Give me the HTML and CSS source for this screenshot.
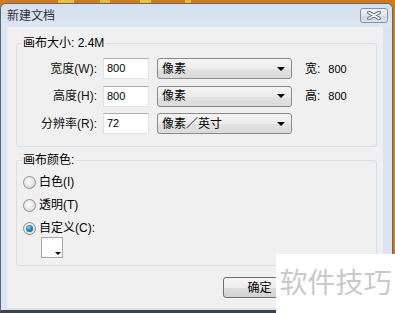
FILE: index.html
```html
<!DOCTYPE html>
<html lang="zh-CN">
<head>
<meta charset="utf-8">
<title>新建文档</title>
<link rel="stylesheet" href="styles.css">
</head>
<body>
<div class="desktop">
  <div class="window">
    <div class="titlebar">
      <span class="title">新建文档</span>
      <button class="close" type="button" aria-label="关闭">
        <svg width="14" height="9" viewBox="0 0 14 9">
          <path d="M2 1.5 L12 7.5 M12 1.5 L2 7.5" stroke="#55606e" stroke-width="3.6" stroke-linecap="round"/>
          <path d="M2 1.5 L12 7.5 M12 1.5 L2 7.5" stroke="#ffffff" stroke-width="1.8" stroke-linecap="round"/>
        </svg>
      </button>
    </div>
    <div class="client">
      <fieldset class="group group-size">
        <legend>画布大小: 2.4M</legend>
        <div class="rows">
          <div class="row">
            <label class="lbl">宽度(W):</label>
            <div class="input">800</div>
            <div class="combo"><span>像素</span><i class="arrow"></i></div>
            <span class="info">宽:<span class="num">800</span></span>
          </div>
          <div class="row">
            <label class="lbl">高度(H):</label>
            <div class="input">800</div>
            <div class="combo"><span>像素</span><i class="arrow"></i></div>
            <span class="info">高:<span class="num">800</span></span>
          </div>
          <div class="row">
            <label class="lbl">分辨率(R):</label>
            <div class="input">72</div>
            <div class="combo"><span>像素／英寸</span><i class="arrow"></i></div>
          </div>
        </div>
      </fieldset>
      <fieldset class="group group-color">
        <legend>画布颜色:</legend>
        <div class="radios">
          <div class="radio"><span class="dot"></span>白色(I)</div>
          <div class="radio"><span class="dot"></span>透明(T)</div>
          <div class="radio"><span class="dot on"></span>自定义(C):</div>
        </div>
        <div class="swatch"><i class="mini-arrow"></i></div>
      </fieldset>
      <div class="buttons">
        <button class="btn" type="button">确定</button>
        <button class="btn" type="button" aria-label="取消"></button>
      </div>
    </div>
  </div>
</div>
<div class="watermark">软件技巧</div>
</body>
</html>
```
FILE: styles.css
```css
* { box-sizing: border-box; }
html, body { margin: 0; padding: 0; }
body {
  width: 395px;
  height: 313px;
  overflow: hidden;
  position: relative;
  background:
    linear-gradient(90deg, transparent 58px, #e8c03c 58px, #e8c03c 74px, transparent 74px,
      transparent 100px, #e6bd3a 100px, #e6bd3a 110px, transparent 110px,
      transparent 140px, #e9c43e 140px, #e9c43e 151px, transparent 151px,
      transparent 185px, #e6bd3a 185px, #e6bd3a 191px, transparent 191px) top left / 395px 3px no-repeat,
    #cf7a1f;
  font-family: "Liberation Sans", "Noto Sans CJK SC", sans-serif;
  font-size: 12px;
  color: #000;
}
.desktop { padding-top: 3px; }
.window {
  width: 393px;
  height: 310px;
  border: 1px solid #5d6773;
  border-bottom: 3px solid #3d434a;
  border-radius: 6px 6px 0 0;
  background: #dbe5f1;
  display: flex;
  flex-direction: column;
  padding-bottom: 2px;
}
.titlebar {
  height: 23px;
  flex: none;
  display: flex;
  align-items: center;
  padding-left: 6px;
  border-radius: 5px 5px 0 0;
  background: linear-gradient(#d4e0ee, #dde7f3);
}
.title {
  color: #2b2f35;
  line-height: 14px;
  margin-top: 1px;
}
.close {
  margin-left: auto;
  margin-right: 4px;
  align-self: flex-start;
  margin-top: 4px;
  width: 28px;
  height: 15px;
  padding: 0;
  border: 1px solid #8393a7;
  border-radius: 3px;
  background: linear-gradient(#eef2f7, #dbe3ee 50%, #cfd9e6 51%, #d9e2ec);
  display: flex;
  align-items: center;
  justify-content: center;
}
.close svg { display: block; }
.client {
  margin: 0 9px 0 6px;
  height: 281px;
  background: #f0f0f0;
  padding: 9px 6px 0 9px;
  display: flex;
  flex-direction: column;
}
.group {
  margin: 0;
  border: 1px solid #d5dfe5;
  border-radius: 3px;
  padding: 0;
  min-width: 0;
}
.group legend {
  margin-left: 5px;
  padding: 0 1px;
  line-height: 14px;
  color: #000;
}
.group-size { padding: 8px 0 12px; }
.rows {
  display: flex;
  flex-direction: column;
  gap: 6.5px;
}
.row {
  display: flex;
  align-items: center;
  height: 21px;
}
.lbl {
  width: 80px;
  text-align: right;
  line-height: 14px;
  color: #111;
}
.input {
  margin-left: 6px;
  width: 46px;
  height: 21px;
  border: 1px solid #dfe3e9;
  border-top-color: #abadb3;
  background: #fff;
  padding: 0 3px;
  line-height: 19px;
  font-size: 11px;
}
.combo {
  margin-left: 8px;
  width: 135px;
  height: 21px;
  border: 1px solid #8a8a8a;
  border-radius: 3px;
  background: linear-gradient(#f6f6f6, #ececec 50%, #e2e2e2 51%, #dadada);
  display: flex;
  align-items: center;
  padding: 0 6px 0 4px;
  line-height: 14px;
}
.combo span { flex: 1; }
.arrow {
  width: 0;
  height: 0;
  border-left: 4px solid transparent;
  border-right: 4px solid transparent;
  border-top: 4px solid #000;
}
.info {
  margin-left: 13px;
  line-height: 14px;
}
.info .num {
  margin-left: 8px;
  font-size: 11px;
}
.group-color { margin-top: 6px; padding: 7px 0 7px; }
.radios {
  display: flex;
  flex-direction: column;
  gap: 7px;
}
.radio {
  display: flex;
  align-items: center;
  height: 16px;
  line-height: 14px;
}
.dot {
  width: 13px;
  height: 13px;
  margin-left: 6px;
  margin-right: 3px;
  border-radius: 50%;
  border: 1px solid #8e8f8f;
  background: radial-gradient(circle at 45% 40%, #ffffff 0, #e9e9e9 45%, #cfcfcf 90%);
  position: relative;
}
.dot.on::after {
  content: "";
  position: absolute;
  left: 2px;
  top: 2px;
  width: 7px;
  height: 7px;
  border-radius: 50%;
  background: radial-gradient(circle at 40% 35%, #8ed0f0 0, #2a86b8 45%, #0c4a6f 100%);
}
.swatch {
  margin: 1px 0 0 24px;
  width: 22px;
  height: 21px;
  border: 1px solid #a6a6a6;
  background: #fff;
  position: relative;
}
.mini-arrow {
  position: absolute;
  right: 1px;
  bottom: 2px;
  width: 0;
  height: 0;
  border-left: 3px solid transparent;
  border-right: 3px solid transparent;
  border-top: 3px solid #000;
}
.buttons {
  margin-top: 11px;
  display: flex;
  justify-content: flex-end;
  gap: 8px;
}
.btn {
  width: 73px;
  height: 21px;
  border: 1px solid #707070;
  border-radius: 3px;
  background: linear-gradient(#f4f4f4, #ececec 50%, #dfdfdf 51%, #d2d2d2);
  font-family: "Liberation Sans", "Noto Sans CJK SC", sans-serif;
  font-size: 12px;
  line-height: 14px;
  color: #000;
  padding: 0;
}
.watermark {
  position: absolute;
  right: 0;
  bottom: 0;
  width: 119px;
  height: 59px;
  background: #fff;
  color: #c9c9c9;
  font-family: "Noto Sans CJK SC", sans-serif;
  font-size: 28px;
  line-height: 1;
  display: flex;
  align-items: center;
  justify-content: center;
  padding-bottom: 5px;
}
```
